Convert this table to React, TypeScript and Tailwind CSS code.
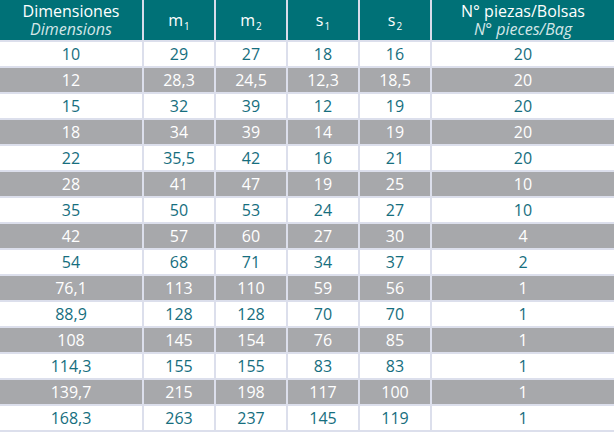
import React from "react";

const rows: string[][] = [
  ["10", "29", "27", "18", "16", "20"],
  ["12", "28,3", "24,5", "12,3", "18,5", "20"],
  ["15", "32", "39", "12", "19", "20"],
  ["18", "34", "39", "14", "19", "20"],
  ["22", "35,5", "42", "16", "21", "20"],
  ["28", "41", "47", "19", "25", "10"],
  ["35", "50", "53", "24", "27", "10"],
  ["42", "57", "60", "27", "30", "4"],
  ["54", "68", "71", "34", "37", "2"],
  ["76,1", "113", "110", "59", "56", "1"],
  ["88,9", "128", "128", "70", "70", "1"],
  ["108", "145", "154", "76", "85", "1"],
  ["114,3", "155", "155", "83", "83", "1"],
  ["139,7", "215", "198", "117", "100", "1"],
  ["168,3", "263", "237", "145", "119", "1"],
];

const widths = ["w-[142px]", "w-[72px]", "w-[72px]", "w-[72px]", "w-[72px]", "flex-1"];

function Sym({ base, sub }: { base: string; sub: string }) {
  return (
    <span className="relative">
      {base}
      <span className="text-[10px] relative top-[4px] ml-[1px]">{sub}</span>
    </span>
  );
}

export default function App() {
  return (
    <div
      className="w-[614px] h-[432px] bg-white overflow-hidden font-medium"
      style={{ fontFamily: '"Open Sans", "Noto Sans", sans-serif' }}
    >
      <div className="flex h-[40px] bg-[#007177] text-white text-[16px] leading-[18px]">
        <div className="w-[142px] flex flex-col items-center justify-center">
          <span>Dimensiones</span>
          <span className="italic text-[#d4e6e7]">Dimensions</span>
        </div>
        <div className="w-[72px] border-l-2 border-[#d9dcea] flex items-center justify-center pt-[2px]">
          <Sym base="m" sub="1" />
        </div>
        <div className="w-[72px] border-l-2 border-[#d9dcea] flex items-center justify-center pt-[2px]">
          <Sym base="m" sub="2" />
        </div>
        <div className="w-[72px] border-l-2 border-[#d9dcea] flex items-center justify-center pt-[2px]">
          <Sym base="s" sub="1" />
        </div>
        <div className="w-[72px] border-l-2 border-[#d9dcea] flex items-center justify-center pt-[2px]">
          <Sym base="s" sub="2" />
        </div>
        <div className="flex-1 border-l-2 border-[#d9dcea] flex flex-col items-center justify-center">
          <span>N° piezas/Bolsas</span>
          <span className="italic text-[#d4e6e7]">N° pieces/Bag</span>
        </div>
      </div>
      {rows.map((r, i) => {
        const gray = i % 2 === 1;
        return (
          <div
            key={i}
            className={`flex h-[26px] border-t-2 border-[#dcdfec] text-[16px] ${
              gray ? "bg-[#a7a8ab] text-white" : "bg-white text-[#166e7e]"
            }`}
          >
            {r.map((c, j) => (
              <div
                key={j}
                className={`${widths[j]} flex items-center justify-center ${
                  j > 0 ? "border-l-2 border-[#dcdfec]" : ""
                }`}
              >
                {c}
              </div>
            ))}
          </div>
        );
      })}
      <div className="h-[2px] bg-[#dcdfec]" />
    </div>
  );
}
